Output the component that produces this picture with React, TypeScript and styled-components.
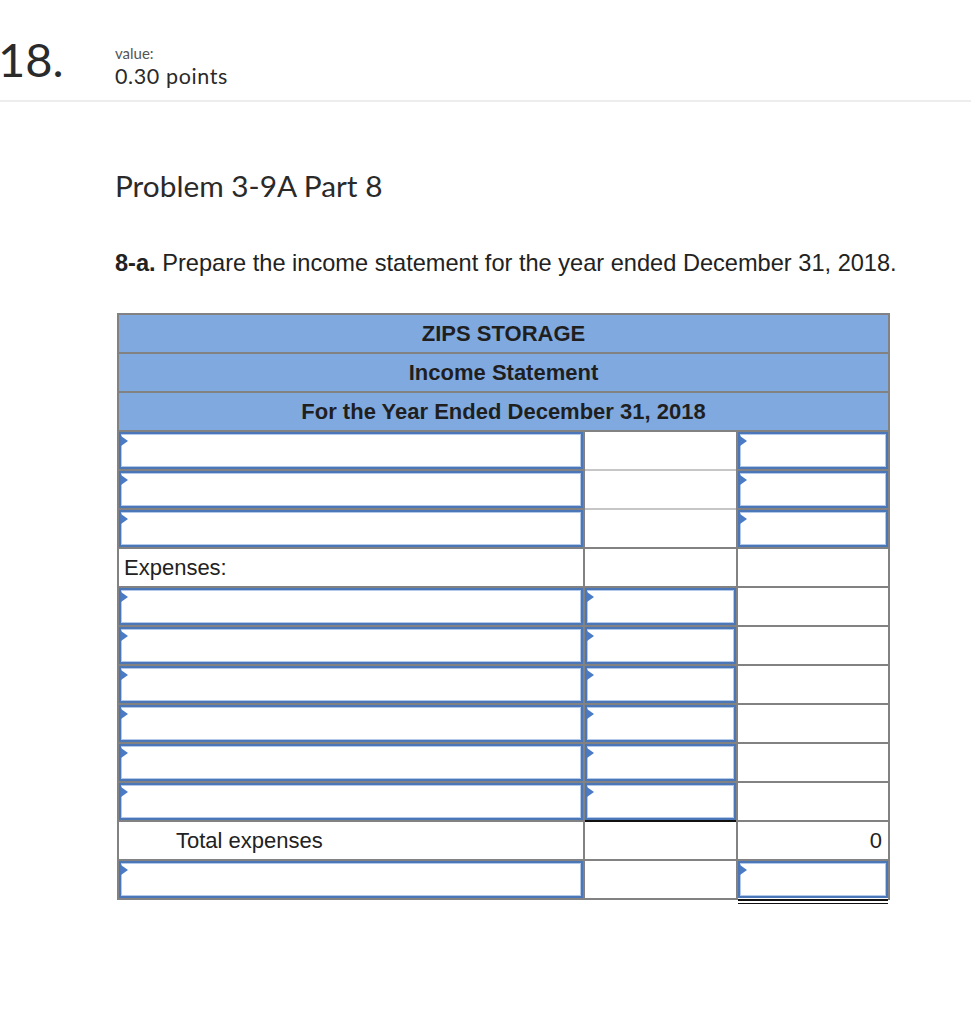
import React from "react";
import styled, { createGlobalStyle } from "styled-components";

const Global = createGlobalStyle`
  html, body { margin: 0; padding: 0; background: #fff; }
  body { font-family: "Liberation Sans", Arial, sans-serif; color: #222; }
`;

const Page = styled.div`
  width: 971px;
  min-height: 1024px;
`;

const QuestionHeader = styled.header`
  display: flex;
  align-items: flex-start;
  padding-top: 36px;
  height: 64px;
  border-bottom: 2px solid #ededed;
`;

const QNumber = styled.div`
  width: 117px;
  font-family: Lato, "Open Sans", sans-serif;
  font-size: 47px;
  line-height: 1;
  color: #2a2a2a;
  margin-left: -2px;
`;

const ValueBox = styled.div`
  display: flex;
  flex-direction: column;
  font-family: Lato, "Open Sans", sans-serif;
  padding-top: 8px;
`;

const ValueLabel = styled.div`
  font-size: 15px;
  line-height: 18px;
  color: #555;
`;

const ValuePoints = styled.div`
  font-size: 21.5px;
  line-height: 24px;
  color: #2a2a2a;
  letter-spacing: 0.6px;
  margin-top: 2px;
`;

const Body = styled.main`
  padding-left: 115px;
`;

const Title = styled.h2`
  margin: 0;
  padding-top: 66px;
  font-family: Lato, "Open Sans", sans-serif;
  font-weight: 400;
  font-size: 29.8px;
  line-height: 36px;
  color: #2a2a2a;
`;

const Prompt = styled.p`
  margin: 0;
  padding-top: 46px;
  font-size: 23.6px;
  line-height: 26px;
  color: #222;
  white-space: nowrap;
  strong { font-weight: 700; }
`;

const Table = styled.div`
  margin-top: 37px;
  margin-left: 2px;
  width: 773px;
  display: grid;
  grid-template-columns: 464px 151px 150px;
  grid-auto-rows: 37px;
  gap: 2px;
  padding: 2px;
  box-sizing: border-box;
  background: #828282;
`;

const HeadCell = styled.div`
  grid-column: 1 / -1;
  background: #80aadf;
  display: flex;
  align-items: center;
  justify-content: center;
  font-weight: 700;
  font-size: 22px;
  color: #1f1f1f;
`;

const Cell = styled.div<{ $align?: "left" | "right"; $indent?: number; $soft?: boolean }>`
  background: #fff;
  display: flex;
  align-items: center;
  justify-content: ${(p) => (p.$align === "right" ? "flex-end" : "flex-start")};
  padding: 0 ${(p) => (p.$align === "right" ? "6px" : "0")} 0
    ${(p) => (p.$indent !== undefined ? `${p.$indent}px` : "5px")};
  font-size: 22px;
  color: #222;
  ${(p) => (p.$soft ? "box-shadow: 0 2px 0 #c6c6c6;" : "")}
`;

const Input = styled.div<{ $under?: "single" | "double" }>`
  position: relative;
  background: #fff;
  border: 2px solid #4b76b8;
  box-shadow: inset 0 0 0 1px #b3c9ea
    ${(p) =>
      p.$under === "single"
        ? ", 0 2px 0 #111"
        : p.$under === "double"
        ? ", 0 1px 0 #fff, 0 3px 0 #111, 0 5px 0 #fff, 0 6px 0 #111"
        : ""};
  box-sizing: border-box;
  &::before {
    content: "";
    position: absolute;
    left: 0;
    top: 2px;
    border-top: 5px solid transparent;
    border-bottom: 5px solid transparent;
    border-left: 7px solid #4a7bc4;
  }
`;

const topRows = [0, 1, 2];
const expRows = [0, 1, 2, 3, 4, 5];

export default function App() {
  return (
    <Page>
      <Global />
      <QuestionHeader>
        <QNumber>18.</QNumber>
        <ValueBox>
          <ValueLabel>value:</ValueLabel>
          <ValuePoints>0.30 points</ValuePoints>
        </ValueBox>
      </QuestionHeader>
      <Body>
        <Title>Problem 3-9A Part 8</Title>
        <Prompt>
          <strong>8-a.</strong> Prepare the income statement for the year ended December 31, 2018.
        </Prompt>
        <Table>
          <HeadCell>ZIPS STORAGE</HeadCell>
          <HeadCell>Income Statement</HeadCell>
          <HeadCell>For the Year Ended December 31, 2018</HeadCell>
          {topRows.map((i) => (
            <React.Fragment key={`r${i}`}>
              <Input />
              <Cell $soft={i < 2} />
              <Input />
            </React.Fragment>
          ))}
          <Cell>Expenses:</Cell>
          <Cell />
          <Cell />
          {expRows.map((i) => (
            <React.Fragment key={`e${i}`}>
              <Input />
              <Input $under={i === expRows.length - 1 ? "single" : undefined} />
              <Cell />
            </React.Fragment>
          ))}
          <Cell $indent={57}>Total expenses</Cell>
          <Cell />
          <Cell $align="right">0</Cell>
          <Input />
          <Cell />
          <Input $under="double" />
        </Table>
      </Body>
    </Page>
  );
}
